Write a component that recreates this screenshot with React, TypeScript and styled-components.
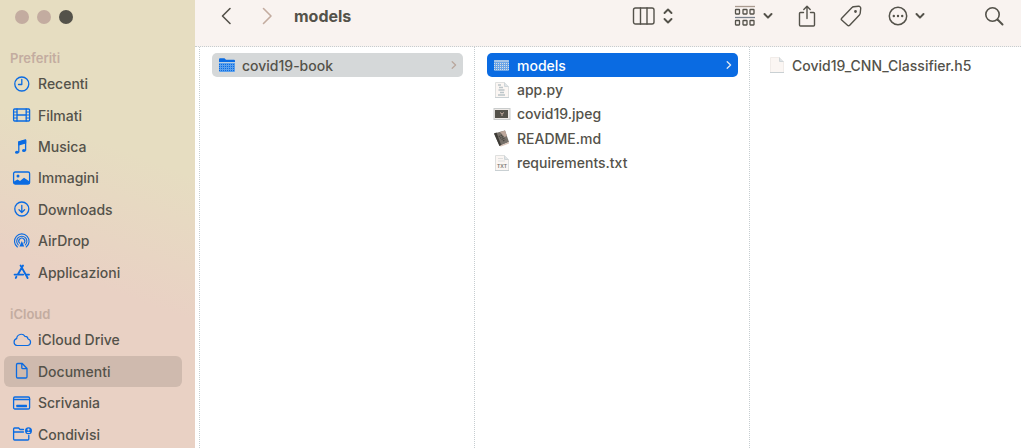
import React from 'react';
import styled, { createGlobalStyle, css } from 'styled-components';

const ink = '#54524a';
const blue = '#0a6be2';

const GlobalStyle = createGlobalStyle`
  * { box-sizing: border-box; }
  html, body, #root { height: 100%; }
  body {
    margin: 0;
    color: ${ink};
    font-family: Inter, "Liberation Sans", sans-serif;
    font-size: 14px;
    font-weight: 500;
    overflow: hidden;
  }
  button { border: 0; padding: 0; background: none; color: inherit; font: inherit; cursor: pointer; }
  ul { list-style: none; margin: 0; padding: 0; }
  svg { display: block; flex: none; }
`;

const Window = styled.div`
  display: flex;
  height: 100%;
  min-height: 448px;
  background: #fff;
`;

const Sidebar = styled.aside`
  width: 195px;
  flex: none;
  padding: 10px 12px 0 4px;
  overflow: hidden;
  background: linear-gradient(200deg, #e6ddc1 34%, #e9d1c4 62%);
`;

const TrafficLights = styled.div`
  display: flex;
  gap: 8px;
  padding-left: 11px;
`;

const Light = styled.button<{ $dark?: boolean }>`
  && {
    width: 14px;
    height: 14px;
    border-radius: 50%;
    background: ${(p) => (p.$dark ? ink : '#c3aca0')};
  }
`;

const SectionTitle = styled.h2`
  margin: 0;
  padding-left: 6px;
  font-size: 13px;
  line-height: 16px;
  font-weight: 600;
  color: #c3aca0;
`;

const Favorites = styled.section`
  padding-top: 26px;
`;

const Cloud = styled.section`
  padding-top: 18px;
`;

const PlaceList = styled.ul<{ $height: number }>`
  display: grid;
  grid-auto-rows: 1fr;
  height: ${(p) => p.$height}px;
  margin-top: 2px;
`;

const Place = styled.a<{ $selected?: boolean }>`
  display: flex;
  align-items: center;
  gap: 6px;
  width: 178px;
  height: 100%;
  padding-left: 8px;
  border-radius: 6px;
  color: inherit;
  text-decoration: none;
  white-space: nowrap;
  background: ${(p) => (p.$selected ? '#cfbaae' : 'transparent')};
`;

const Main = styled.main`
  display: flex;
  flex-direction: column;
  flex: 1;
  min-width: 0;
`;

const Toolbar = styled.header`
  display: flex;
  align-items: center;
  height: 47px;
  flex: none;
  padding: 0 17px 14px 25px;
  background: #f9f3f0;
  border-bottom: 1px dotted #c6cdd0;
`;

const Navigation = styled.div`
  display: flex;
  gap: 26px;
`;

const Title = styled.h1`
  margin: 0 auto 0 20px;
  font-size: 16px;
  line-height: 20px;
  font-weight: 700;
`;

const Tools = styled.div`
  display: flex;
  align-items: center;
`;

const Tool = styled.button<{ $after: number }>`
  display: flex;
  align-items: center;
  gap: 7px;
  margin-right: ${(p) => p.$after}px;
`;

const Columns = styled.div`
  display: flex;
  flex: 1;
  padding-left: 4px;
`;

const Column = styled.section<{ $fill?: boolean }>`
  padding: 6px 11px 0 12px;
  border-left: 1px dotted #c6cdd0;
  ${(p) => (p.$fill ? css`flex: 1; min-width: 0;` : css`width: 275px; flex: none;`)}
`;

const FileList = styled.ul<{ $height: number }>`
  display: grid;
  grid-auto-rows: 1fr;
  align-items: center;
  height: ${(p) => p.$height}px;
`;

type Tone = 'plain' | 'path' | 'active';
const tones: Record<Tone, ReturnType<typeof css>> = {
  plain: css`background: none;`,
  path: css`background: #d5d8d9;`,
  active: css`background: ${blue}; color: #fff;`,
};

const FileButton = styled.button<{ $tone: Tone }>`
  && {
    display: flex;
    align-items: center;
    width: 100%;
    height: 24px;
    padding: 0 6px 0 6px;
    gap: 6px;
    border-radius: 5px;
    text-align: left;
    white-space: nowrap;
    ${(p) => tones[p.$tone]}
  }
`;

const FileName = styled.span`
  flex: 1;
`;

const Side = ({ children }: { children: React.ReactNode }) => (
  <svg width="20" height="20" viewBox="0 0 20 20" fill="none" stroke={blue} strokeWidth="1.3" strokeLinecap="round" strokeLinejoin="round" aria-hidden="true">
    {children}
  </svg>
);

const ClockIcon = () => (
  <Side><circle cx="9.8" cy="10" r="7" /><path d="M9.8 5.5v5H6.500" /></Side>
);
const FilmIcon = () => (
  <Side>
    <rect x="1.6" y="4" width="16" height="12" rx="1" />
    <path d="M5 4v12M14.2 4v12M5 10h9.2" />
    <path d="M1.6 7H5M1.6 10H5M1.6 13H5M14.2 7h3.4M14.2 10h3.4M14.2 13h3.4" strokeWidth="1" />
  </Side>
);
const MusicIcon = () => (
  <Side>
    <path d="M6.8 15V5.2l6.8-1.9v10" />
    <path d="M6.8 4.8l6.8-1.9v3l-6.8 1.9z" fill={blue} />
    <ellipse cx="4.9" cy="15.3" rx="1.9" ry="1.5" fill={blue} stroke="none" />
    <ellipse cx="11.9" cy="13.5" rx="1.9" ry="1.5" fill={blue} stroke="none" />
  </Side>
);
const PictureIcon = () => (
  <Side>
    <rect x="1.6" y="4" width="16" height="12" rx="1.5" />
    <circle cx="6" cy="8" r="1.5" fill={blue} stroke="none" />
    <path d="M2 13.500l3.500-2 2.500 1.500 4-3.200 5.600 3.700V16H2z" fill={blue} stroke="none" />
  </Side>
);
const DownloadIcon = () => (
  <Side><circle cx="9.8" cy="10" r="7" /><path d="M9.8 6.3v7M7 10.8l2.8 2.7 2.8-2.7" /></Side>
);
const AirDropIcon = () => (
  <Side>
    <path d="M5.4 16a7.3 7.3 0 1 1 8.8 0" strokeWidth="1.1" />
    <path d="M6.2 13.9a5.1 5.1 0 1 1 7.2 0" strokeWidth="1.1" />
    <path d="M7.6 12.2a3 3 0 1 1 4.4 0" strokeWidth="1.1" />
    <path d="M9.8 10l2.4 5.600H7.400z" fill={blue} stroke="none" />
  </Side>
);
const AppsIcon = () => (
  <Side>
    <path d="M8.6 3.6l5.8 10.2M11 3.6L5.8 12.6M2.6 12.6h8.6M13.8 12.6H17M4.4 14.8l-.6 1.1M14.8 14.6l.8 1.3" strokeWidth="1.9" />
  </Side>
);
const CloudIcon = () => (
  <Side>
    <path d="M4.800 15.500h10.700a3.300 3.300 0 0 0 .5-6.500 2.900 2.900 0 0 0-3-2.600 4.500 4.500 0 0 0-8.300 2.300A3.500 3.500 0 0 0 4.800 15.500z" strokeWidth="1.2" />
  </Side>
);
const DocumentIcon = () => (
  <Side><path d="M4.500 3.700A1.200 1.200 0 0 1 5.700 2.500h4.600l4.700 5v8.300a1.200 1.200 0 0 1-1.200 1.200H5.700a1.200 1.200 0 0 1-1.200-1.200zM9.800 2.800v3.900a1 1 0 0 0 1 1h4" /></Side>
);
const DesktopIcon = () => (
  <Side>
    <rect x="1.6" y="4" width="16" height="12" rx="1.3" />
    <path d="M1.6 6.500h16" />
    <rect x="4.3" y="11.7" width="10.7" height="2.5" rx=".5" fill={blue} stroke="none" />
  </Side>
);
const SharedIcon = () => (
  <Side>
    <path d="M11.500 5.500H8L6.700 4H2.600a1 1 0 0 0-1 1v10a1 1 0 0 0 1 1h13.200a1 1 0 0 0 1-1v-3.500M1.600 8h9.900" />
    <circle cx="16.5" cy="6.7" r="3.5" fill={blue} stroke="none" />
    <circle cx="16.5" cy="5.7" r="1.100" fill="#e9d1c4" stroke="none" />
    <path d="M14.700 9a1.900 1.900 0 0 1 3.600 0z" fill="#e9d1c4" stroke="none" />
  </Side>
);

const Stroke = ({ w, h, color = ink, width = 1.5, children }: { w: number; h: number; color?: string; width?: number; children: React.ReactNode }) => (
  <svg width={w} height={h} viewBox={`0 0 ${w} ${h}`} fill="none" stroke={color} strokeWidth={width} strokeLinecap="round" strokeLinejoin="round" aria-hidden="true">
    {children}
  </svg>
);

const DownChevron = () => <Stroke w={10} h={8} width={2}><path d="M1.500 2L5 5.600 8.500 2" /></Stroke>;
const RowChevron = ({ color }: { color: string }) => (
  <Stroke w={6} h={10} color={color} width={1.3}><path d="M1.200 1.800L4.600 5 1.200 8.200" /></Stroke>
);

const FolderIcon = ({ active }: { active?: boolean }) =>
  active ? (
    <svg width="18" height="18" viewBox="0 0 18 18" aria-hidden="true">
      <rect x="1" y="4" width="15" height="11" rx="1" fill="#6ba4e6" />
      <path d="M1 5h15" stroke="#e2e6e8" />
      <path d="M1 7.500h15M1 9.500h15M1 11.500h15M1 13.500h15" stroke="#d7dfe4" strokeDasharray="1 1" />
    </svg>
  ) : (
    <svg width="18" height="18" viewBox="0 0 18 18" aria-hidden="true">
      <path d="M1 3.200a1 1 0 0 1 1-1h4.500L8 3.800h8a1 1 0 0 1 1 1V7H1z" fill={blue} />
      <rect x="1" y="6" width="16" height="10" rx="1" fill="#5ba0ec" />
      <path d="M1 6.500h16" stroke="#b9cfe2" />
      <path d="M1 8.500h16M1 10.500h16M1 12.500h16M1 14.500h16" stroke={blue} strokeDasharray="1 1" />
    </svg>
  );

const PageIcon = ({ kind }: { kind: 'py' | 'txt' | 'blank' }) => (
  <svg width="18" height="18" viewBox="0 0 18 18" aria-hidden="true">
    <path d="M2.500 1.500h9l4 4v11h-13z" fill="#fbf6f3" stroke={kind === 'blank' ? '#f1ece9' : '#dfe0df'} />
    <path d="M11.500 1.500v4h4" fill="#dfe4e7" stroke="#d0d6d9" />
    <path d="M2 16.500h14" stroke="#c9d0d3" />
    {kind === 'py' && <path d="M5 4h3M6 6.500h4M5.500 9h6M7 11.500h4M5 14h7" stroke="#bcc5c9" strokeWidth="1.4" />}
    {kind === 'txt' && (
      <>
        <path d="M5 4.500h5M5 7h7" stroke="#dfe0df" />
        <text x="9" y="14" textAnchor="middle" fontSize="5" fontWeight="600" fill="#77756d">TXT</text>
      </>
    )}
  </svg>
);

const JpegIcon = () => (
  <svg width="18" height="18" viewBox="0 0 18 18" aria-hidden="true">
    <rect x="1" y="3.500" width="16" height="11" fill="#eeeae7" stroke="#c9cccc" />
    <rect x="2" y="5" width="13" height="8" fill="#54524a" />
    <path d="M7 7.500l2 1.500 2-1.500M9 9v2" fill="none" stroke="#c3aca0" />
  </svg>
);

const ReadmeIcon = () => (
  <svg width="18" height="18" viewBox="0 0 18 18" aria-hidden="true">
    <path d="M1 4.500l11-3 4 11.500-9.500 4z" fill="#77716a" />
    <path d="M1 4.500l2.500-1 4.800 13-1.800.5z" fill="#3d3b36" />
    <path d="M7 2.900l5-1.400 2 5.500-2.500 1z" fill="#bda79b" />
    <path d="M6.500 17l9.500-4v1.500L8 17.500z" fill="#d9c4b8" />
    <path d="M6 7l5 5M8 6l4 5" stroke="#45433d" strokeWidth="1.5" strokeDasharray="1 1" />
  </svg>
);

const favorites = [
  { name: 'Recenti', icon: <ClockIcon /> },
  { name: 'Filmati', icon: <FilmIcon /> },
  { name: 'Musica', icon: <MusicIcon /> },
  { name: 'Immagini', icon: <PictureIcon /> },
  { name: 'Downloads', icon: <DownloadIcon /> },
  { name: 'AirDrop', icon: <AirDropIcon /> },
  { name: 'Applicazioni', icon: <AppsIcon /> },
];

const cloud = [
  { name: 'iCloud Drive', icon: <CloudIcon /> },
  { name: 'Documenti', icon: <DocumentIcon />, selected: true },
  { name: 'Scrivania', icon: <DesktopIcon /> },
  { name: 'Condivisi', icon: <SharedIcon /> },
];

type PlaceData = { name: string; icon: React.ReactNode; selected?: boolean };

const Places = ({ items, height }: { items: PlaceData[]; height: number }) => (
  <PlaceList $height={height}>
    {items.map((p) => (
      <li key={p.name}>
        <Place href="#" $selected={p.selected} aria-current={p.selected ? 'page' : undefined}>
          {p.icon}
          <span>{p.name}</span>
        </Place>
      </li>
    ))}
  </PlaceList>
);

const FileRow = ({ name, icon, tone = 'plain' }: { name: string; icon: React.ReactNode; tone?: Tone }) => (
  <li>
    <FileButton $tone={tone}>
      {icon}
      <FileName>{name}</FileName>
      {tone !== 'plain' && <RowChevron color={tone === 'active' ? '#e4eaf0' : '#b9a79d'} />}
    </FileButton>
  </li>
);

export default function App() {
  return (
    <>
      <GlobalStyle />
      <Window>
        <Sidebar>
          <TrafficLights>
            <Light aria-label="Chiudi" />
            <Light aria-label="Riduci" />
            <Light aria-label="Ingrandisci" $dark />
          </TrafficLights>
          <Favorites>
            <SectionTitle>Preferiti</SectionTitle>
            <Places items={favorites} height={220} />
          </Favorites>
          <Cloud>
            <SectionTitle>iCloud</SectionTitle>
            <Places items={cloud} height={126} />
          </Cloud>
        </Sidebar>
        <Main>
          <Toolbar>
            <Navigation>
              <button aria-label="Indietro">
                <Stroke w={14} h={18} width={1.6}><path d="M10 1.500L2.500 9l7.500 7.500" /></Stroke>
              </button>
              <button aria-label="Avanti">
                <Stroke w={14} h={18} width={1.6} color="#c3aca0"><path d="M3.500 1.500L11 9l-7.500 7.500" /></Stroke>
              </button>
            </Navigation>
            <Title>models</Title>
            <Tools>
              <Tool $after={61} aria-label="Vista">
                <Stroke w={24} h={20} width={1.4}>
                  <rect x="1.5" y="2" width="20.5" height="16" rx="2" />
                  <path d="M8.500 2v16M15 2v16" />
                </Stroke>
                <Stroke w={10} h={18} width={1.9}><path d="M1.500 6L5 2.500 8.500 6M1.500 12L5 15.500 8.500 12" /></Stroke>
              </Tool>
              <Tool $after={25} aria-label="Raggruppa">
                <Stroke w={22} h={22} width={1.3}>
                  <path d="M1 1.500h20" stroke="#a99a8f" strokeLinecap="butt" />
                  <path d="M1 12.500h20" stroke="#77808a" strokeLinecap="butt" />
                  <rect x="1.5" y="4.5" width="4" height="4.5" rx=".5" />
                  <rect x="9" y="4.5" width="4" height="4.5" rx=".5" />
                  <rect x="16" y="4.5" width="4" height="4.5" rx=".5" />
                  <rect x="1.5" y="15.500" width="4" height="4.5" rx=".5" />
                  <rect x="9" y="15.500" width="4" height="4.5" rx=".5" />
                  <rect x="16" y="15.500" width="4" height="4.5" rx=".5" />
                </Stroke>
                <DownChevron />
              </Tool>
              <Tool $after={24} aria-label="Condividi">
                <Stroke w={18} h={24} width={1.4}>
                  <path d="M5.500 8.500H2.500a1 1 0 0 0-1 1V21a1 1 0 0 0 1 1h13a1 1 0 0 0 1-1V9.500a1 1 0 0 0-1-1h-3M9 14.500V2.500M5.800 5.500L9 2.300l3.200 3.200" />
                </Stroke>
              </Tool>
              <Tool $after={26} aria-label="Tag">
                <Stroke w={22} h={22} width={1.4}>
                  <path d="M1.700 13.200L12 2.600a2.500 2.500 0 0 1 1.500-.8l5-.5a2 2 0 0 1 2.200 2.200l-.5 4.800a2.500 2.500 0 0 1-.8 1.600L9.700 20.300a1.500 1.500 0 0 1-2.200 0l-5.800-5.200a1.400 1.400 0 0 1 0-1.900z" />
                  <circle cx="15.5" cy="6.5" r=".7" fill={ink} />
                </Stroke>
              </Tool>
              <Tool $after={59} aria-label="Azioni">
                <Stroke w={20} h={20} width={1.5}>
                  <circle cx="10" cy="10" r="8.7" />
                  <path d="M5.800 10h.01M10 10h.01M14.200 10h.01" strokeWidth="2.4" />
                </Stroke>
                <DownChevron />
              </Tool>
              <Tool $after={0} aria-label="Cerca">
                <Stroke w={20} h={20} width={1.6}>
                  <circle cx="8.5" cy="8.5" r="6.7" />
                  <path d="M13.500 13.500l5 5" strokeWidth="2" />
                </Stroke>
              </Tool>
            </Tools>
          </Toolbar>
          <Columns>
            <Column>
              <FileList $height={24}>
                <FileRow name="covid19-book" icon={<FolderIcon />} tone="path" />
              </FileList>
            </Column>
            <Column>
              <FileList $height={122}>
                <FileRow name="models" icon={<FolderIcon active />} tone="active" />
                <FileRow name="app.py" icon={<PageIcon kind="py" />} />
                <FileRow name="covid19.jpeg" icon={<JpegIcon />} />
                <FileRow name="README.md" icon={<ReadmeIcon />} />
                <FileRow name="requirements.txt" icon={<PageIcon kind="txt" />} />
              </FileList>
            </Column>
            <Column $fill>
              <FileList $height={24}>
                <FileRow name="Covid19_CNN_Classifier.h5" icon={<PageIcon kind="blank" />} />
              </FileList>
            </Column>
          </Columns>
        </Main>
      </Window>
    </>
  );
}
